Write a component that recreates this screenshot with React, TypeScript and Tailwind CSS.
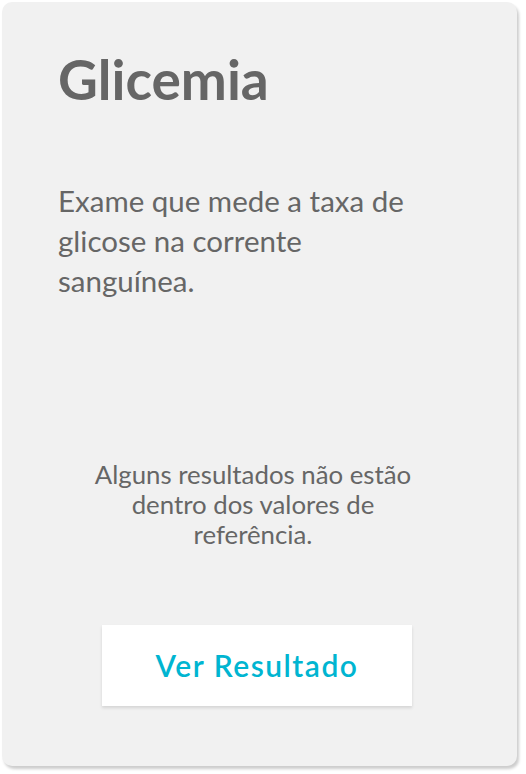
export default function App() {
  return (
    <div className="min-h-screen bg-white p-[2px] font-['Lato',sans-serif]">
      <div className="flex h-[764px] w-[515px] flex-col rounded-[10px] bg-[#f1f1f1] shadow-[2px_3px_3px_rgba(0,0,0,0.2)]">
        <div className="pl-[56px] pt-[47px]">
          <h1 className="text-[55px] font-bold leading-[60px] text-[#666666]">Glicemia</h1>
          <p className="mt-[72px] w-[370px] text-[29.5px] leading-[40px] text-[#666666]">
            Exame que mede a taxa de glicose na corrente sanguínea.
          </p>
        </div>
        <p className="ml-[81px] mt-[158px] w-[340px] text-center text-[25.8px] leading-[30px] text-[#666666]">
          Alguns resultados não estão dentro dos valores de referência.
        </p>
        <div className="ml-[100px] mt-[76px] flex">
          <button className="h-[81px] w-[310px] bg-white text-[30px] font-semibold tracking-[1.5px] text-[#00b5d1] shadow-[0_2px_3px_rgba(0,0,0,0.12)]">
            Ver Resultado
          </button>
        </div>
      </div>
    </div>
  );
}
